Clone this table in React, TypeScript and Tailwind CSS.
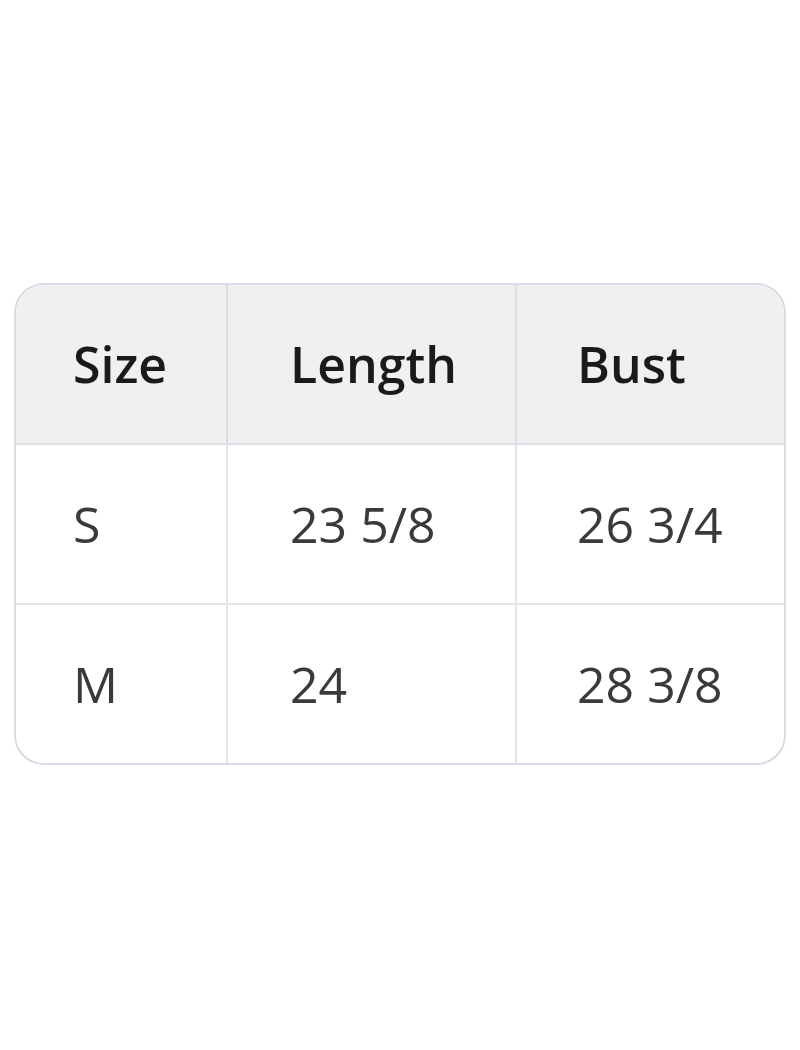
const header = ['Size', 'Length', 'Bust'];

const rows = [
  ['S', '23 5/8', '26 3/4'],
  ['M', '24', '28 3/8'],
];

const colClass = ['w-[212px]', 'w-[289px]', 'flex-1'];
const padClass = ['pl-[57px]', 'pl-[62px]', 'pl-[60px]'];

export default function App() {
  return (
    <div className="min-h-screen bg-white pt-[283px] px-[14px]" style={{ fontFamily: '"Open Sans", "Noto Sans", sans-serif' }}>
      <div className="rounded-[30px] border-2 border-[#d6dde6] overflow-hidden">
        <div className="flex bg-[#f0f0f0] border-b-2 border-[#dce0e6]">
          {header.map((h, i) => (
            <div
              key={h}
              className={`${colClass[i]} ${padClass[i]} h-[158px] flex items-center text-[50px] font-semibold text-[#1a1a1a] ${i < 2 ? 'border-r-2 border-[#dce0e6]' : ''}`}
            >
              {h}
            </div>
          ))}
        </div>
        {rows.map((row, r) => (
          <div key={r} className={`flex ${r < rows.length - 1 ? 'border-b-2 border-[#e1e4e9]' : ''}`}>
            {row.map((cell, i) => (
              <div
                key={i}
                className={`${colClass[i]} ${padClass[i]} h-[158px] flex items-center text-[50px] text-[#3a3a3a] ${i < 2 ? 'border-r-2 border-[#e1e4e9]' : ''}`}
              >
                {cell}
              </div>
            ))}
          </div>
        ))}
      </div>
    </div>
  );
}
